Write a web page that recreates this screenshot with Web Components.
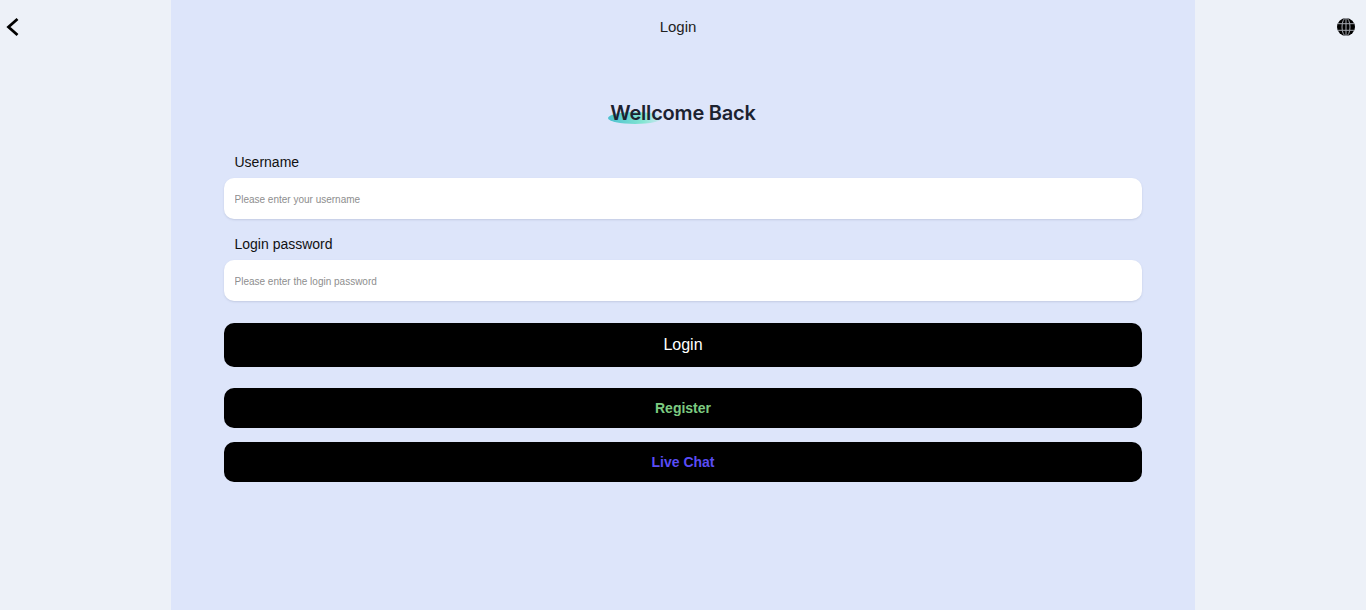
<!DOCTYPE html>
<html lang="en">
<head>
<meta charset="utf-8">
<title>Login</title>
<style>
  html, body { margin: 0; height: 100%; overflow: hidden; }
  body { background: #edf1f8; font-family: "Liberation Sans", Arial, sans-serif; }
</style>
</head>
<body>
<login-page>
  <top-bar slot="top" title-text="Login"></top-bar>
  <login-form></login-form>
</login-page>

<script>
// Page shell: pale side areas with the blue column in the middle
class LoginPage extends HTMLElement {
  constructor() {
    super();
    this.attachShadow({ mode: 'open' });
    this.shadowRoot.innerHTML = `
      <style>
        :host { display: block; height: 610px; }
        .column {
          width: 1024px;
          height: 100%;
          margin: 0 auto;
          background: #dde5fa;
        }
      </style>
      <slot name="top"></slot>
      <div class="column"><slot></slot></div>
    `;
  }
}

// Back arrow, title and language globe
class TopBar extends HTMLElement {
  constructor() {
    super();
    this.attachShadow({ mode: 'open' });
  }

  connectedCallback() {
    this.shadowRoot.innerHTML = `
      <style>
        :host {
          display: flex;
          justify-content: space-between;
          align-items: center;
          position: absolute;
          top: 0;
          left: 0;
          right: 0;
          height: 54px;
          z-index: 1;
        }
        svg { display: block; }
        .back { margin-left: 5px; }
        .globe { margin-right: 11px; }
        h1 {
          margin: 0 0 1px -2px;
          font-size: 15px;
          font-weight: 400;
          color: #222;
        }
      </style>
      <svg class="back" width="16" height="20" viewBox="0 0 16 20">
        <path d="M12.5 2 L3.5 10 L12.5 18" fill="none" stroke="#000" stroke-width="2.8"/>
      </svg>
      <h1>${this.getAttribute('title-text')}</h1>
      <svg class="globe" width="18" height="18" viewBox="0 0 18 18">
        <circle cx="9" cy="9" r="9" fill="#000"/>
        <g fill="none" stroke="#a4a8b0" stroke-width="1">
          <ellipse cx="9" cy="9" rx="4" ry="9"/>
          <path d="M9 0 V18 M1 5.7 H17 M1 12.3 H17"/>
        </g>
      </svg>
    `;
  }
}

// Label above a white rounded input
class FieldRow extends HTMLElement {
  constructor() {
    super();
    this.attachShadow({ mode: 'open' });
  }

  connectedCallback() {
    this.shadowRoot.innerHTML = `
      <style>
        :host { display: block; }
        label {
          display: block;
          height: 32px;
          line-height: 32px;
          padding-left: 10.5px;
          font-size: 14px;
          color: #111;
        }
        input {
          display: block;
          width: 100%;
          height: 41px;
          box-sizing: border-box;
          padding: 2px 10.5px 0;
          border: 0;
          border-radius: 10px;
          background: #fff;
          box-shadow: 0 1px 2px rgba(120, 130, 160, 0.25);
          font: 10px "Liberation Sans", Arial, sans-serif;
          outline: none;
        }
        input::placeholder { color: #8e8e8e; opacity: 1; }
      </style>
      <label>${this.getAttribute('label')}</label>
      <input type="${this.getAttribute('type') || 'text'}" placeholder="${this.getAttribute('placeholder')}">
    `;
  }
}

class ActionButton extends HTMLElement {
  constructor() {
    super();
    this.attachShadow({ mode: 'open' });
    this.shadowRoot.innerHTML = `
      <style>
        :host {
          display: flex;
          align-items: center;
          justify-content: center;
          height: var(--btn-height, 40px);
          background: #000;
          border-radius: 10px;
          color: var(--btn-color, #fff);
          font-size: var(--btn-size, 14px);
          font-weight: var(--btn-weight, 700);
          cursor: pointer;
        }
      </style>
      <slot></slot>
    `;
  }
}

// Heading with the teal smudge behind the first letters
class BrandHeading extends HTMLElement {
  constructor() {
    super();
    this.attachShadow({ mode: 'open' });
    this.shadowRoot.innerHTML = `
      <style>
        :host {
          display: flex;
          justify-content: center;
          height: 26px;
        }
        .wrap { position: relative; }
        .smudge {
          position: absolute;
          left: -2px;
          top: 12px;
          width: 54px;
          height: 12px;
          border-radius: 50%;
          background: linear-gradient(90deg, #4cc0cf, #84e6d2 65%, rgba(150, 235, 215, 0.15));
        }
        h2 {
          position: relative;
          margin: 0;
          font: 600 20px/26px Inter, "Noto Sans", sans-serif;
          letter-spacing: -0.2px;
          color: #1c2230;
          white-space: nowrap;
        }
      </style>
      <div class="wrap">
        <span class="smudge"></span>
        <h2><slot></slot></h2>
      </div>
    `;
  }
}

class LoginForm extends HTMLElement {
  constructor() {
    super();
    this.attachShadow({ mode: 'open' });
    this.shadowRoot.innerHTML = `
      <style>
        :host {
          display: block;
          box-sizing: border-box;
          height: 100%;
          padding: 100px 53px 0;
        }
        .fields { display: grid; gap: 9px; margin-top: 20px; }
        .buttons { display: grid; margin-top: 22px; }
        .login { --btn-height: 44px; --btn-size: 16px; --btn-weight: 400; margin-bottom: 21px; }
        .register { --btn-color: #7ccb80; margin-bottom: 14px; }
        .chat { --btn-color: #5a4cf5; }
      </style>
      <brand-heading>Wellcome Back</brand-heading>
      <div class="fields">
        <field-row label="Username" placeholder="Please enter your username"></field-row>
        <field-row label="Login password" type="password" placeholder="Please enter the login password"></field-row>
      </div>
      <div class="buttons">
        <action-button class="login">Login</action-button>
        <action-button class="register">Register</action-button>
        <action-button class="chat">Live Chat</action-button>
      </div>
    `;
  }
}

customElements.define('login-page', LoginPage);
customElements.define('top-bar', TopBar);
customElements.define('field-row', FieldRow);
customElements.define('action-button', ActionButton);
customElements.define('brand-heading', BrandHeading);
customElements.define('login-form', LoginForm);
</script>
</body>
</html>
